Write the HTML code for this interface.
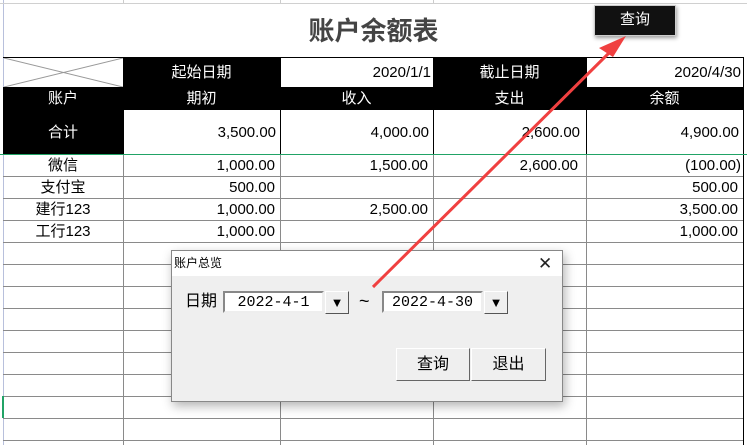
<!DOCTYPE html><html><head><meta charset="utf-8"><style>
body{margin:0;width:747px;height:445px;overflow:hidden;background:#fff;font-family:"Liberation Sans","Noto Sans CJK SC",sans-serif;position:relative}
.a{position:absolute;box-sizing:border-box}
.c{position:absolute;box-sizing:border-box;font-size:15px;line-height:1;display:flex;align-items:center}
</style></head><body>
<div class="a" style="left:3px;top:0;width:1px;height:445px;background:#b8c0dc"></div>
<div class="a" style="left:123px;top:0;width:1px;height:3px;background:#ccc"></div>
<div class="a" style="left:280px;top:0;width:1px;height:3px;background:#ccc"></div>
<div class="a" style="left:433px;top:0;width:1px;height:3px;background:#ccc"></div>
<div class="a" style="left:0;top:3px;width:747px;height:1px;background:#d0d0d0"></div>
<div class="c" style="left:4px;top:4px;width:739px;height:53px;justify-content:center;font-size:26px;font-weight:bold;color:#444">账户余额表</div>
<div class="a" style="left:3px;top:57px;width:741px;height:1px;background:#000"></div>
<div class="a" style="left:743px;top:57px;width:1px;height:388px;background:#000"></div>
<svg class="a" style="left:4px;top:58px" width="119" height="29"><line x1="0" y1="0" x2="119" y2="29" stroke="#999"/><line x1="0" y1="29" x2="119" y2="0" stroke="#999"/></svg>
<div class="c" style="left:123px;top:58px;width:157px;height:29px;background:#000;color:#fff;justify-content:center">起始日期</div>
<div class="c" style="left:280px;top:58px;width:153px;height:29px;justify-content:flex-end;padding-right:2px">2020/1/1</div>
<div class="c" style="left:433px;top:58px;width:153px;height:29px;background:#000;color:#fff;justify-content:center">截止日期</div>
<div class="c" style="left:586px;top:58px;width:157px;height:29px;justify-content:flex-end;padding-right:2px">2020/4/30</div>
<div class="a" style="left:3px;top:87px;width:741px;height:23px;background:#000"></div>
<div class="c" style="left:3px;top:87px;width:120px;height:23px;color:#fff;justify-content:center">账户</div>
<div class="c" style="left:123px;top:87px;width:157px;height:23px;color:#fff;justify-content:center">期初</div>
<div class="c" style="left:280px;top:87px;width:153px;height:23px;color:#fff;justify-content:center">收入</div>
<div class="c" style="left:433px;top:87px;width:153px;height:23px;color:#fff;justify-content:center">支出</div>
<div class="c" style="left:586px;top:87px;width:157px;height:23px;color:#fff;justify-content:center">余额</div>
<div class="c" style="left:3px;top:110px;width:120px;height:44px;background:#000;color:#fff;justify-content:center">合计</div>
<div class="c" style="left:123px;top:110px;width:157px;height:44px;justify-content:flex-end;padding-right:4px">3,500.00</div>
<div class="c" style="left:280px;top:110px;width:153px;height:44px;justify-content:flex-end;padding-right:4px">4,000.00</div>
<div class="c" style="left:433px;top:110px;width:153px;height:44px;justify-content:flex-end;padding-right:6px">2,600.00</div>
<div class="c" style="left:586px;top:110px;width:157px;height:44px;justify-content:flex-end;padding-right:4px">4,900.00</div>
<div class="a" style="left:280px;top:58px;width:1px;height:96px;background:#000"></div>
<div class="a" style="left:433px;top:58px;width:1px;height:96px;background:#000"></div>
<div class="a" style="left:586px;top:58px;width:1px;height:96px;background:#000"></div>
<div class="a" style="left:123px;top:110px;width:1px;height:44px;background:#000"></div>
<div class="a" style="left:0;top:154px;width:747px;height:1px;background:#21a366"></div>
<svg class="a" style="left:0;top:0" width="747" height="445"><g stroke="#8a8a8a" stroke-width="1">
<line x1="123.5" y1="155" x2="123.5" y2="445"/><line x1="280.5" y1="155" x2="280.5" y2="445"/><line x1="433.5" y1="155" x2="433.5" y2="445"/><line x1="586.5" y1="155" x2="586.5" y2="445"/>
<line x1="3" y1="176.5" x2="743" y2="176.5"/><line x1="3" y1="198.5" x2="743" y2="198.5"/><line x1="3" y1="220.5" x2="743" y2="220.5"/><line x1="3" y1="242.5" x2="743" y2="242.5"/><line x1="3" y1="264.5" x2="743" y2="264.5"/><line x1="3" y1="286.5" x2="743" y2="286.5"/><line x1="3" y1="308.5" x2="743" y2="308.5"/><line x1="3" y1="330.5" x2="743" y2="330.5"/><line x1="3" y1="352.5" x2="743" y2="352.5"/><line x1="3" y1="374.5" x2="743" y2="374.5"/><line x1="3" y1="396.5" x2="743" y2="396.5"/><line x1="3" y1="418.5" x2="743" y2="418.5"/><line x1="3" y1="440.5" x2="743" y2="440.5"/></g>
<line x1="3" y1="396" x2="3" y2="418" stroke="#21a366" stroke-width="2"/></svg>
<div class="c" style="left:3px;top:155px;width:120px;height:21px;justify-content:center">微信</div>
<div class="c" style="left:3px;top:177px;width:120px;height:21px;justify-content:center">支付宝</div>
<div class="c" style="left:3px;top:199px;width:120px;height:21px;justify-content:center">建行123</div>
<div class="c" style="left:3px;top:221px;width:120px;height:21px;justify-content:center">工行123</div>
<div class="c" style="left:123px;top:155px;width:157px;height:21px;justify-content:flex-end;padding-right:5px">1,000.00</div>
<div class="c" style="left:123px;top:177px;width:157px;height:21px;justify-content:flex-end;padding-right:5px">500.00</div>
<div class="c" style="left:123px;top:199px;width:157px;height:21px;justify-content:flex-end;padding-right:5px">1,000.00</div>
<div class="c" style="left:123px;top:221px;width:157px;height:21px;justify-content:flex-end;padding-right:5px">1,000.00</div>
<div class="c" style="left:280px;top:155px;width:153px;height:21px;justify-content:flex-end;padding-right:5px">1,500.00</div>
<div class="c" style="left:280px;top:199px;width:153px;height:21px;justify-content:flex-end;padding-right:5px">2,500.00</div>
<div class="c" style="left:433px;top:155px;width:153px;height:21px;justify-content:flex-end;padding-right:8px">2,600.00</div>
<div class="c" style="left:586px;top:155px;width:157px;height:21px;justify-content:flex-end;padding-right:2px">(100.00)</div>
<div class="c" style="left:586px;top:177px;width:157px;height:21px;justify-content:flex-end;padding-right:5px">500.00</div>
<div class="c" style="left:586px;top:199px;width:157px;height:21px;justify-content:flex-end;padding-right:5px">3,500.00</div>
<div class="c" style="left:586px;top:221px;width:157px;height:21px;justify-content:flex-end;padding-right:5px">1,000.00</div>
<div class="a" style="left:171px;top:250px;width:392px;height:152px;background:#efefef;border:1px solid #888;box-shadow:2px 4px 10px rgba(0,0,0,.3)"></div>
<div class="a" style="left:172px;top:251px;width:390px;height:25px;background:#fff"></div>
<div class="c" style="left:174px;top:254px;height:18px;font-size:12px">账户总览</div>
<div class="c" style="left:538px;top:254px;height:18px;font-size:17px;color:#222">✕</div>
<div class="c" style="left:185px;top:291px;height:22px;font-size:16px">日期</div>
<div class="c" style="left:223px;top:291px;width:101px;height:22px;background:#fff;border:2px solid;border-color:#888 #eee #eee #888;justify-content:center;font-family:'Liberation Mono',monospace;font-size:15px">2022-4-1</div>
<div class="c" style="left:325px;top:291px;width:24px;height:23px;background:#efefef;border:1px solid;border-color:#fff #555 #555 #fff;justify-content:center;font-size:13px">▼</div>
<div class="c" style="left:359px;top:291px;height:20px;font-size:18px">~</div>
<div class="c" style="left:382px;top:291px;width:101px;height:22px;background:#fff;border:2px solid;border-color:#888 #eee #eee #888;justify-content:center;font-family:'Liberation Mono',monospace;font-size:15px">2022-4-30</div>
<div class="c" style="left:484px;top:291px;width:24px;height:23px;background:#efefef;border:1px solid;border-color:#fff #555 #555 #fff;justify-content:center;font-size:13px">▼</div>
<div class="c" style="left:396px;top:348px;width:74px;height:33px;border:1px solid;border-color:#fff #666 #666 #fff;justify-content:center;font-size:16px">查询</div>
<div class="c" style="left:471px;top:348px;width:75px;height:33px;border:1px solid;border-color:#fff #666 #666 #fff;justify-content:center;font-size:16px">退出</div>
<div class="c" style="left:594px;top:5px;width:82px;height:31px;background:#111;border:1px solid #ccc;box-shadow:1px 2px 4px rgba(0,0,0,.4);color:#fff;justify-content:center;font-size:15px;padding-bottom:3px">查询</div>
<svg class="a" style="left:0;top:0" width="747" height="445"><line x1="373" y1="287" x2="615" y2="47" stroke="#f04040" stroke-width="3"/><polygon points="626,36 599,48 613,57" fill="#f04040"/></svg>
</body></html>
